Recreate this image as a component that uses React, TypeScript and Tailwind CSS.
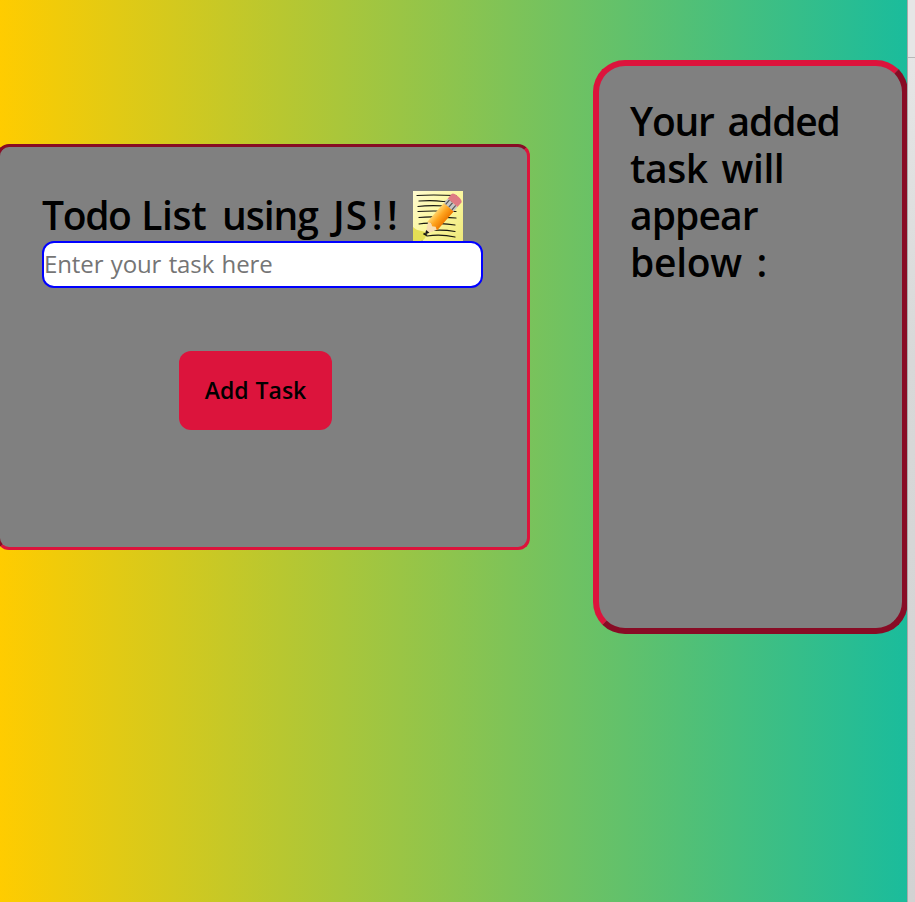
function NoteIcon() {
  return (
    <svg viewBox="0 0 50 50" className="h-[50px] w-[50px] shrink-0" aria-hidden="true">
      <defs>
        <linearGradient id="paper" x1="0" y1="0" x2="1" y2="1">
          <stop offset="0" stopColor="#fffbd0" />
          <stop offset="0.5" stopColor="#fbf7a0" />
          <stop offset="1" stopColor="#eee878" />
        </linearGradient>
        <linearGradient id="wood" x1="0" y1="0" x2="1" y2="0">
          <stop offset="0" stopColor="#ffd36a" />
          <stop offset="0.45" stopColor="#ffa51f" />
          <stop offset="1" stopColor="#ee7a00" />
        </linearGradient>
      </defs>
      <path d="M0 0H50V50H10L0 37Z" fill="url(#paper)" />
      <path d="M0 36C5 41 10 39 13 42C14 46 11 49 8 50H0Z" fill="#e5df55" />
      <g fill="none" stroke="#171711" strokeWidth="1.2" strokeLinecap="round">
        <path d="M4 4.5Q18 3.5 43 4.5" />
        <path d="M6 10Q20 9 30 10.5L42 10" />
        <path d="M5 15.5Q15 14 34 15" />
        <path d="M5 20.5Q18 19.5 43 20.5" />
        <path d="M6 26.5Q19 25 43 27" />
        <path d="M6 33Q16 31 42 34" />
        <path d="M14 40Q28 38 42 40.5" />
        <path d="M14 45Q28 43 42 46" />
      </g>
      <g transform="translate(12 43.5) rotate(41) scale(1.18 0.98)">
        <path d="M0 0L-5.5 -13H5.5Z" fill="#f8ddb0" />
        <path d="M0 0L-1.8 -4.3H1.8Z" fill="#171717" />
        <path d="M-5.5 -11V-38H5.5V-11L2.5 -13L0 -11L-2.5 -13Z" fill="url(#wood)" />
        <path d="M-5.5 -37V-43H5.5V-37Z" fill="#c5c5c5" />
        <path d="M-3.5 -37V-43M0 -37V-43M3.5 -37V-43" stroke="#555" strokeWidth="1" />
        <path d="M-5.5 -43V-49Q-5 -51.5 0 -51.5Q5 -51.5 5.5 -49V-43Z" fill="#df7b83" />
      </g>
      <path d="M10.5 42.5L14 44.5" stroke="#171711" strokeWidth="1.8" />
    </svg>
  );
}

export default function App() {
  return (
    <div className="flex h-[902px] w-[915px] overflow-hidden font-['Trebuchet_MS','Open_Sans',sans-serif] text-black">
      <main className="flex w-[908px] shrink-0 items-start justify-between bg-[linear-gradient(to_right,#ffcc00,#1abc9c)]">
        <section className="mt-[144px] -ml-[3px] h-[406px] w-[533px] shrink-0 rounded-[12px] border-[3px] border-[crimson] bg-[#808080] pt-11 pl-[42px] [border-style:inset]">
          <div className="flex h-[50px] w-[441px] items-center">
            <h1 className="w-[371px] shrink-0 pb-0.5 text-[39px] leading-[48px] font-semibold whitespace-nowrap [word-spacing:2px]">
              <span className="tracking-[-1.35px]">Todo </span>
              <span className="tracking-[-0.4px] [word-spacing:6px]">List </span>
              <span className="tracking-[-1px] [word-spacing:6px]">using </span>
              <span className="tracking-[1px]">J</span>
              <span className="tracking-[4.5px]">S!!</span>
            </h1>
            <NoteIcon />
          </div>
          <input
            type="text"
            placeholder="Enter your task here"
            className="block h-[47px] w-[441px] rounded-[12px] border-2 border-[blue] bg-white pb-0.5 text-[24px] tracking-[-0.1px] outline-none [word-spacing:1.2px] placeholder:text-[#757575]"
          />
          <button className="mt-[63px] ml-[137px] block h-[79px] w-[153px] rounded-[12px] bg-[crimson] text-[23px] font-semibold whitespace-nowrap [word-spacing:1px]">
            Add Task
          </button>
        </section>
        <section className="mt-[60px] h-[574px] w-[315px] shrink-0 rounded-[32px] border-[6px] border-[crimson] bg-[#808080] pt-[31px] pl-[31px] [border-style:outset]">
          <h2 className="text-[39px] leading-[47px] font-semibold whitespace-nowrap [word-spacing:5px]">
            <span className="block tracking-[-1.2px]">Your added</span>
            <span className="block tracking-[-0.4px] [word-spacing:4px]">task will</span>
            <span className="block tracking-[-0.9px]">appear</span>
            <span className="block tracking-[-0.3px]">below :</span>
          </h2>
        </section>
      </main>
      <aside className="-ml-px w-2 shrink-0 border-l border-[#a9a9a9] bg-[linear-gradient(to_bottom,#e8e8e8,#d8d8d8_40%,#d2d2d2)]">
        <div className="h-[58px] border-b border-[#b8b8b8] bg-[#e6e6e6]" />
      </aside>
    </div>
  );
}
